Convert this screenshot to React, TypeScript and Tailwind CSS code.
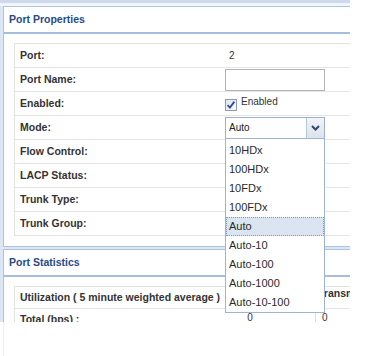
import React from "react";

const rows = [
  "Port:",
  "Port Name:",
  "Enabled:",
  "Mode:",
  "Flow Control:",
  "LACP Status:",
  "Trunk Type:",
  "Trunk Group:",
];

const options = ["10HDx", "100HDx", "10FDx", "100FDx", "Auto", "Auto-10", "Auto-100", "Auto-1000", "Auto-10-100"];

function Checkbox() {
  return (
    <svg width="12" height="12" viewBox="0 0 12 12" className="block">
      <defs>
        <linearGradient id="cbg" x1="0" y1="0" x2="1" y2="1">
          <stop offset="0" stopColor="#dfe5ee" />
          <stop offset="1" stopColor="#fbfcfd" />
        </linearGradient>
      </defs>
      <rect x="0.5" y="0.5" width="11" height="11" fill="url(#cbg)" stroke="#8b9bb3" />
      <path d="M2.6 6.2 L4.9 8.6 L9.4 2.6" fill="none" stroke="#2d4a9a" strokeWidth="1.8" />
    </svg>
  );
}

function Value({ i }: { i: number }) {
  if (i === 0) return <span className="pl-[4px] text-[10px] text-[#333]">2</span>;
  if (i === 1)
    return <div className="w-[100px] h-[22px] border border-[#b4b4b4] bg-white" />;
  if (i === 2)
    return (
      <div className="flex items-start h-[12px] mt-[2px]">
        <Checkbox />
        <span className="ml-[4px] -mt-[5px] text-[10px] text-[#333]">Enabled</span>
      </div>
    );
  if (i === 3)
    return (
      <div className="relative">
        <div className="w-[100px] h-[22px] border border-[#9cb1cf] bg-white flex">
          <div className="flex-1 flex items-center pl-[3px] text-[10px] text-[#222]">Auto</div>
          <div className="w-[18px] border-l border-[#b9c7da] bg-gradient-to-b from-[#f1f4f8] to-[#dce3ec] flex items-center justify-center">
            <svg width="9" height="6" viewBox="0 0 9 6">
              <path d="M1 1 L4.5 4.5 L8 1" fill="none" stroke="#33486a" strokeWidth="2" />
            </svg>
          </div>
        </div>
        <div className="absolute left-0 top-[21px] z-10 w-[100px] border border-[#9fb4d5] bg-white pt-[2px]">
          {options.map((o) => (
            <div
              key={o}
              className={
                o === "Auto"
                  ? "h-[19px] flex items-center pl-[3px] text-[11px] text-[#2a2a2a] bg-[#dbe4f1] outline-1 outline-dotted outline-[#7c98c2] -outline-offset-1"
                  : "h-[19px] flex items-center pl-[3px] text-[11px] text-[#2a2a2a]"
              }
            >
              {o}
            </div>
          ))}
        </div>
      </div>
    );
  return null;
}

export default function App() {
  return (
    <div className="relative w-[380px] h-[356px] bg-white font-['Liberation_Sans',Arial,sans-serif]">
      <div className="w-[350px] h-[322px] overflow-hidden bg-[#dce6f4]">
        <div className="h-[3px] bg-[#cddaee]" />
        <div className="h-[3px] bg-[#f2f6fb]" />
        <div className="pl-[3px]">
          {/* Port Properties panel */}
          <div className="w-[420px] bg-white border-l border-t border-b border-[#b0c3de]">
            <div className="h-[27px] flex items-center pl-[5px] text-[10.5px] font-bold text-[#274b88] border-b-2 border-[#a6bddd]">
              Port Properties
            </div>
            <div className="pt-[9px] pb-[10px] pl-[10px]">
              <div className="border-l border-t border-[#e2e2e2]">
                {rows.map((r, i) => (
                  <div key={r} className="h-[24px] flex items-center border-b border-[#e5e5e5]">
                    <div className="w-[210px] pl-[5px] text-[10.5px] font-bold text-[#333]">{r}</div>
                    <Value i={i} />
                  </div>
                ))}
              </div>
            </div>
          </div>
          <div className="h-[2px]" />
          {/* Port Statistics panel */}
          <div className="w-[420px] h-[200px] bg-white border-l border-t border-[#b0c3de]">
            <div className="h-[27px] flex items-center pl-[5px] text-[10.5px] font-bold text-[#274b88] border-b-2 border-[#a6bddd]">
              Port Statistics
            </div>
            <div className="pt-[9px] pl-[10px]">
              <div className="border-l border-t border-[#e2e2e2]">
                <div className="h-[22px] flex border-b border-[#e5e5e5]">
                  <div className="w-[300px] flex items-center pl-[5px] text-[10.5px] font-bold text-[#333]">
                    Utilization ( 5 minute weighted average )
                  </div>
                  <div className="pl-[3px] -mt-[1px] text-[10.5px] font-bold text-[#333]">Transmit (bps)</div>
                </div>
                <div className="h-[24px] flex">
                  <div className="w-[170px] pl-[5px] pt-[3px] text-[10.5px] font-bold text-[#333]">Total (bps) :</div>
                  <div className="w-[130px] text-center pt-[1px] text-[10px] text-[#333]">0</div>
                  <div className="border-l border-[#dedede] pl-[6px] pt-[1px] text-[10px] text-[#333]">0</div>
                </div>
              </div>
            </div>
          </div>
        </div>
      </div>
      <div className="absolute left-[3px] top-[322px] bottom-0 w-px bg-[#e9eef5]" />
    </div>
  );
}
